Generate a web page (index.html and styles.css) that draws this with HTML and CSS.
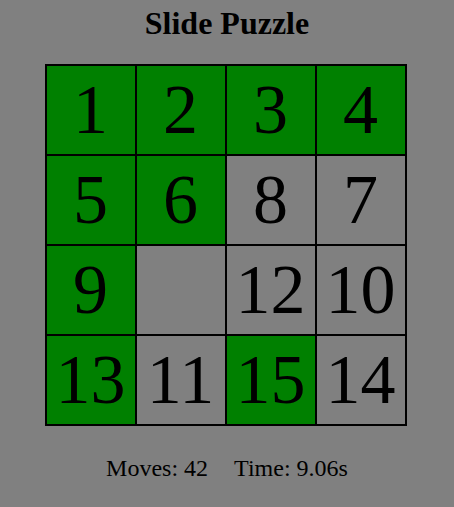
FILE: index.html
```html
<!DOCTYPE html>
<html>
<head>
<meta charset="utf-8">
<link rel="stylesheet" href="styles.css">
</head>
<body>
<div class="app">
  <h1 class="title">Slide Puzzle</h1>
  <div class="board">
    <div class="tile ok">1</div>
    <div class="tile ok">2</div>
    <div class="tile ok">3</div>
    <div class="tile ok">4</div>
    <div class="tile ok">5</div>
    <div class="tile ok">6</div>
    <div class="tile">8</div>
    <div class="tile">7</div>
    <div class="tile ok">9</div>
    <div class="tile empty"></div>
    <div class="tile">12</div>
    <div class="tile">10</div>
    <div class="tile ok">13</div>
    <div class="tile">11</div>
    <div class="tile ok">15</div>
    <div class="tile">14</div>
  </div>
  <div class="stats">
    <span class="stat">Moves: 42</span>
    <span class="stat">Time: 9.06s</span>
  </div>
</div>
</body>
</html>
```
FILE: styles.css
```css
html, body {
  margin: 0;
  padding: 0;
  background: #808080;
}
body {
  font-family: "Liberation Serif", "Times New Roman", serif;
  color: #000;
}
.app {
  display: flex;
  flex-direction: column;
  align-items: center;
}
.title {
  font-size: 32px;
  font-weight: bold;
  margin: 5px 0 22px;
  line-height: normal;
}
.board {
  display: grid;
  grid-template-columns: repeat(4, 90px);
  grid-template-rows: repeat(4, 90px);
  border: 1px solid #000;
  margin-right: 3px;
}
.tile {
  box-sizing: border-box;
  border: 1px solid #000;
  background: #808080;
  display: flex;
  align-items: center;
  justify-content: center;
  font-size: 70px;
  line-height: normal;
}
.tile.ok {
  background: #008000;
}
.stats {
  margin-top: 29px;
  display: flex;
  gap: 26px;
  font-size: 24px;
  line-height: normal;
}
```
